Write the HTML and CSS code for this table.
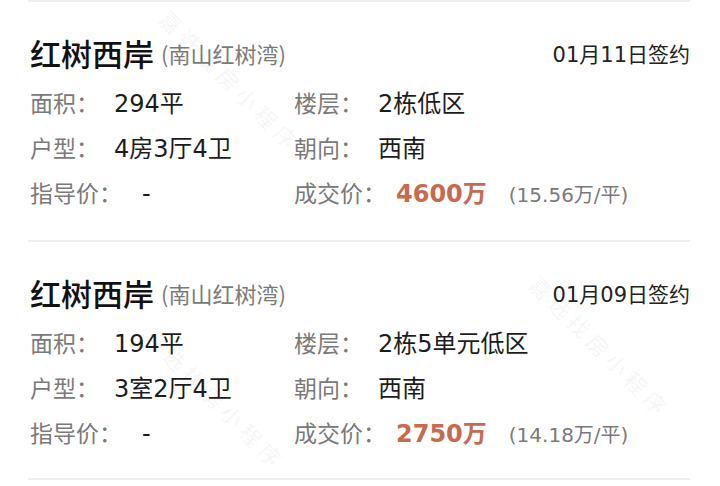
FILE: index.html
```html
<!DOCTYPE html>
<html lang="zh-CN">
<head>
    <meta charset="UTF-8">
    <meta name="viewport" content="width=device-width, initial-scale=1.0">
    <link rel="stylesheet" href="styles.css">
    <title>成交记录</title>
</head>
<body>
    <div class="lista">
        <div class="registro">
            <div class="cabecera">
                <div class="nombre">红树西岸 <span class="zona">(南山红树湾)</span></div>
                <div class="fecha">01月11日签约</div>
            </div>
            <div class="datos">
                <p><span class="etiqueta">面积：</span><span class="valor">294平</span></p>
                <p><span class="etiqueta">楼层：</span><span class="valor">2栋低区</span></p>
                <p><span class="etiqueta">户型：</span><span class="valor">4房3厅4卫</span></p>
                <p><span class="etiqueta">朝向：</span><span class="valor">西南</span></p>
                <p><span class="etiqueta">指导价：</span><span class="valor guion">-</span></p>
                <p><span class="etiqueta">成交价：</span><span class="precio">4600万</span><span class="unitario">(15.56万/平)</span></p>
            </div>
        </div>
        <div class="registro">
            <div class="cabecera">
                <div class="nombre">红树西岸 <span class="zona">(南山红树湾)</span></div>
                <div class="fecha">01月09日签约</div>
            </div>
            <div class="datos">
                <p><span class="etiqueta">面积：</span><span class="valor">194平</span></p>
                <p><span class="etiqueta">楼层：</span><span class="valor">2栋5单元低区</span></p>
                <p><span class="etiqueta">户型：</span><span class="valor">3室2厅4卫</span></p>
                <p><span class="etiqueta">朝向：</span><span class="valor">西南</span></p>
                <p><span class="etiqueta">指导价：</span><span class="valor guion">-</span></p>
                <p><span class="etiqueta">成交价：</span><span class="precio">2750万</span><span class="unitario">(14.18万/平)</span></p>
            </div>
        </div>
        <div class="marca m1">嘉选找房小程序</div>
        <div class="marca m2">嘉选找房小程序</div>
        <div class="marca m3">嘉选找房小程序</div>
    </div>
</body>
</html>
```

FILE: styles.css
```css
* {
    padding: 0;
    margin: 0;
    box-sizing: border-box;
    font-family: "Noto Sans CJK SC", "Noto Sans", sans-serif;
}
body {
    background-color: #fff;
    overflow: hidden;
}
.lista {
    position: relative;
    height: 486px;
    overflow: hidden;
}
.registro {
    margin: 0 30px 0 28px;
    padding: 31px 0 24px 2px;
    border-top: 2px solid #efefef;
    height: 240px;
}
.registro + .registro {
    border-bottom: 2px solid #efefef;
}
.cabecera {
    display: flex;
    justify-content: space-between;
    align-items: center;
    height: 40px;
    margin-bottom: 7px;
}
.nombre {
    font-size: 31px;
    font-weight: 500;
    color: #111;
    line-height: 40px;
}
.zona {
    font-size: 22px;
    font-weight: 400;
    color: #7a7a7a;
    vertical-align: 3px;
}
.fecha {
    font-size: 21px;
    color: #222;
}
.fecha, .valor, .precio, .unitario {
    font-family: "DejaVu Sans", "Noto Sans CJK SC", sans-serif;
}
.datos {
    display: grid;
    grid-template-columns: 264px 1fr;
}
.datos p {
    height: 45px;
    line-height: 45px;
    font-size: 23px;
    white-space: nowrap;
}
.etiqueta {
    color: #7a7a7a;
}
.valor {
    color: #1c1c1c;
    font-size: 24px;
    margin-left: 15px;
}
.guion {
    margin-left: 20px;
}
.precio {
    color: #c66a50;
    font-weight: 700;
    font-size: 24px;
    margin-left: 10px;
}
.unitario {
    color: #7a7a7a;
    font-size: 20px;
    margin-left: 22px;
}
.marca {
    position: absolute;
    font-size: 22px;
    font-weight: 700;
    letter-spacing: 5px;
    color: rgba(0, 0, 0, 0.03);
    transform: rotate(45deg);
    transform-origin: left top;
    white-space: nowrap;
}
.m1 {
    left: 175px;
    top: 2px;
}
.m2 {
    left: 545px;
    top: 268px;
}
.m3 {
    left: 160px;
    top: 320px;
}
```
